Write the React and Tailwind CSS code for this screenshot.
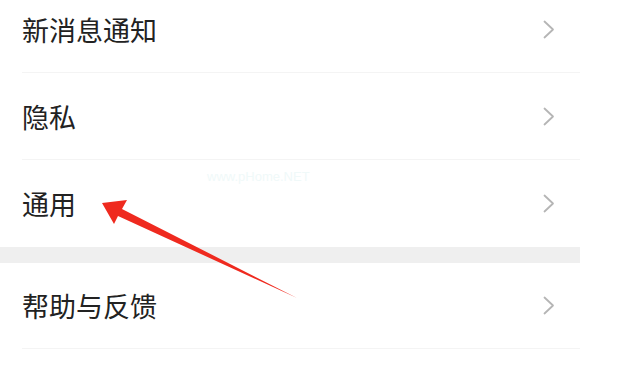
export default function App() {
  const rows1 = ["新消息通知", "隐私", "通用"];
  const Chevron = () => (
    <svg width="12" height="19" viewBox="0 0 12 19" fill="none">
      <polyline points="1.5,1.5 10,9.5 1.5,17.5" stroke="#b5b5b5" strokeWidth="1.8" strokeLinecap="round" strokeLinejoin="round" />
    </svg>
  );
  const font = { fontFamily: '"Noto Sans CJK SC", "Noto Sans", sans-serif' };
  return (
    <div className="relative w-[638px] h-[367px] overflow-hidden bg-white" style={font}>
      <div className="w-[580px] -mt-[14px] flex flex-col">
        {rows1.map((t, i) => (
          <div
            key={t}
            className={`ml-[22px] h-[87px] flex items-center justify-between pr-[25px] ${i < 2 ? "border-b border-[#f4f4f4]" : ""}`}
          >
            <span className="text-[27px] leading-none text-[#222222]">{t}</span>
            <Chevron />
          </div>
        ))}
        <div className="h-[16px] bg-[#efefef]" />
        <div className="ml-[22px] h-[86px] flex items-center justify-between pr-[25px] border-b border-[#f4f4f4]">
          <span className="text-[27px] leading-none text-[#222222]">帮助与反馈</span>
          <Chevron />
        </div>
      </div>
      <div className="absolute left-[207px] top-[167px] text-[13px] text-[#f0f9f9]" style={{ fontFamily: '"Liberation Sans", sans-serif' }}>
        www.pHome.NET
      </div>
      <svg className="absolute left-0 top-0" width="638" height="367" viewBox="0 0 638 367">
        <polygon
          points="102,203 127,200 122,209 297,298 118,216 114,224"
          fill="#ef2a1f"
        />
      </svg>
    </div>
  );
}
